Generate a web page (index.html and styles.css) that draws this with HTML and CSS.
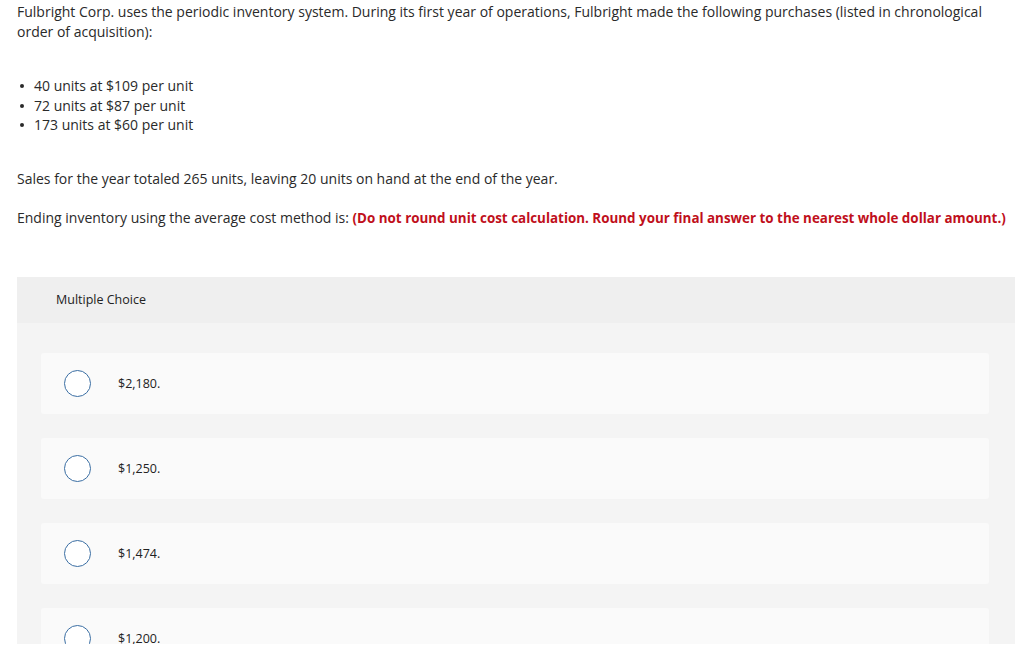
FILE: index.html
```html
<!DOCTYPE html>
<html>
<head>
<meta charset="utf-8">
<link rel="stylesheet" href="styles.css">
</head>
<body>
<div class="page">
  <p class="intro">Fulbright Corp. uses the periodic inventory system. During its first year of operations, Fulbright made the following purchases (listed in chronological order of acquisition):</p>
  <ul class="purchases">
    <li>40 units at $109 per unit</li>
    <li>72 units at $87 per unit</li>
    <li>173 units at $60 per unit</li>
  </ul>
  <p class="sales">Sales for the year totaled 265 units, leaving 20 units on hand at the end of the year.</p>
  <p class="question">Ending inventory using the average cost method is: <strong class="note">(Do not round unit cost calculation. Round your final answer to the nearest whole dollar amount.)</strong></p>
  <div class="panel">
    <div class="panel-head">Multiple Choice</div>
    <div class="panel-body">
      <div class="choice"><span class="radio"></span><span class="label">$2,180.</span></div>
      <div class="choice"><span class="radio"></span><span class="label">$1,250.</span></div>
      <div class="choice"><span class="radio"></span><span class="label">$1,474.</span></div>
      <div class="choice"><span class="radio"></span><span class="label">$1,200.</span></div>
    </div>
  </div>
</div>
</body>
</html>
```
FILE: styles.css
```css
html, body {
  margin: 0;
  padding: 0;
  background: #fff;
}
body {
  font-family: "Open Sans", "Lato", sans-serif;
  font-size: 14px;
  color: #2a2a2a;
}
.page {
  padding: 2px 9px 0 17px;
}
.intro {
  margin: 0;
  line-height: 19.5px;
  max-width: 975px;
}
.purchases {
  margin: 35px 0 0 0;
  padding: 0;
  list-style: none;
  line-height: 19.5px;
}
.purchases li {
  display: flex;
  align-items: center;
}
.purchases li::before {
  content: "";
  width: 4px;
  height: 4px;
  border-radius: 50%;
  background: #2a2a2a;
  margin: 1px 10px 0 3px;
  flex: none;
}
.sales {
  margin: 34px 0 0 0;
  line-height: 20px;
}
.question {
  margin: 19px 0 0 0;
  line-height: 20px;
}
.note {
  color: #c00f1b;
  font-weight: 700;
  font-size: 13.4px;
}
.panel {
  margin-top: 49px;
  height: 367px;
  overflow: hidden;
  background: #f4f4f4;
}
.panel-head {
  height: 46px;
  display: flex;
  align-items: center;
  padding-left: 39px;
  background: #efefef;
  font-size: 12.5px;
  color: #222;
}
.panel-body {
  padding: 30px 26px 0 24px;
}
.choice {
  height: 61px;
  margin-bottom: 24px;
  background: #fafafa;
  border-radius: 3px;
  display: flex;
  align-items: center;
  padding-left: 23px;
}
.radio {
  width: 25px;
  height: 25px;
  border: 1px solid #3a6ea3;
  border-radius: 50%;
  background: #fff;
  flex: none;
}
.label {
  margin-left: 27px;
  font-size: 12.5px;
  color: #222;
}
```
